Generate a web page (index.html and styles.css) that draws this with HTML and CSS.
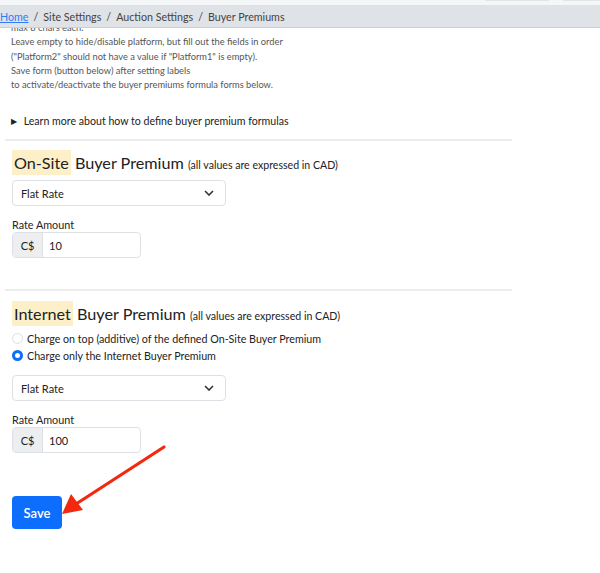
FILE: index.html
```html
<!DOCTYPE html>
<html lang="en">
<head>
    <meta charset="UTF-8">
    <title>Buyer Premiums</title>
    <link rel="stylesheet" href="styles.css">
</head>
<body>
    <!-- Barra superior fija -->
    <div class="topbar">
        <div class="tabstrip">
            <span class="tab tab-a"></span>
            <span class="tab tab-b"></span>
        </div>
        <nav class="breadcrumb">
            <a href="#">Home</a>
            <span class="sep">/</span>
            <span>Site Settings</span>
            <span class="sep">/</span>
            <span>Auction Settings</span>
            <span class="sep">/</span>
            <span>Buyer Premiums</span>
        </nav>
    </div>

    <main class="content">
        <p class="help">
            max 8 chars each.<br>
            Leave empty to hide/disable platform, but fill out the fields in order<br>
            ("Platform2" should not have a value if "Platform1" is empty).<br>
            Save form (button below) after setting labels<br>
            to activate/deactivate the buyer premiums formula forms below.
        </p>

        <div class="details"><span class="caret">&#9654;</span> Learn more about how to define buyer premium formulas</div>

        <hr>

        <section class="premium">
            <h2><mark>On-Site</mark> Buyer Premium <small>(all values are expressed in CAD)</small></h2>
            <div class="select">Flat Rate
                <svg width="10" height="6" viewBox="0 0 10 6"><path d="M1 1l4 4 4-4" fill="none" stroke="#333" stroke-width="1.6"/></svg>
            </div>
            <label class="field-label">Rate Amount</label>
            <div class="input-group"><span class="addon">C$</span><span class="value">10</span></div>
        </section>

        <hr>

        <section class="premium">
            <h2><mark>Internet</mark> Buyer Premium <small>(all values are expressed in CAD)</small></h2>
            <div class="radio first"><span class="dot"></span> Charge on top (additive) of the defined On-Site Buyer Premium</div>
            <div class="radio"><span class="dot checked"></span> Charge only the Internet Buyer Premium</div>
            <div class="select select-gap">Flat Rate
                <svg width="10" height="6" viewBox="0 0 10 6"><path d="M1 1l4 4 4-4" fill="none" stroke="#333" stroke-width="1.6"/></svg>
            </div>
            <label class="field-label">Rate Amount</label>
            <div class="input-group"><span class="addon">C$</span><span class="value">100</span></div>
        </section>

        <button class="btn-save">Save</button>
    </main>

    <!-- Flecha roja de anotación -->
    <svg class="arrow" width="600" height="573" viewBox="0 0 600 573">
        <line x1="164" y1="447" x2="76" y2="504" stroke="#f2290f" stroke-width="3.2" stroke-linecap="round"/>
        <polygon points="62,514 71,494 83,510" fill="#f2290f"/>
    </svg>
</body>
</html>
```

FILE: styles.css
```css
body {
    margin: 0;
    font-family: Lato, "Noto Sans", sans-serif;
    color: #222;
    background: #fff;
}

.topbar {
    position: fixed;
    top: 0;
    left: 0;
    right: 0;
    z-index: 2;
}

.tabstrip {
    height: 5px;
    background: #f5f6f8;
    position: relative;
}

.tab {
    position: absolute;
    top: 0;
    height: 1px;
    background: #e2e4e8;
    border-radius: 0 0 3px 3px;
}

.tab-a { left: 485px; width: 64px; }
.tab-b { left: 563px; width: 37px; }

.breadcrumb {
    display: flex;
    align-items: center;
    gap: 5px;
    height: 22px;
    background: #dfe2e6;
    border-bottom: 1px solid #ccd0d4;
    font-size: 10.7px;
    color: #444;
    white-space: nowrap;
}

.breadcrumb a {
    color: #2f7cf6;
    text-decoration: underline;
}

.content {
    padding: 21px 88px 40px 5px;
}

.help {
    margin: 0 0 0 6px;
    font-size: 9.3px;
    line-height: 14.3px;
    color: #555;
}

.details {
    margin: 23px 0 0 6px;
    font-size: 10.6px;
    color: #222;
}

.caret {
    font-size: 8px;
    margin-right: 4px;
    vertical-align: 1px;
}

hr {
    border: 0;
    border-top: 2px solid #ececec;
    margin: 12px 0 0;
}

.premium {
    padding: 9px 0 19px 7px;
}

.premium + hr + .premium {
    padding-top: 10px;
}

.premium h2 {
    margin: 0;
    font-size: 16.2px;
    font-weight: 400;
    line-height: 26px;
}

mark {
    background: #fdf0c9;
    color: #222;
    padding: 3px 2px;
}

small {
    font-size: 10.6px;
}

.select {
    width: 193px;
    height: 24px;
    margin-top: 2px;
    border: 1px solid #dde1e5;
    border-radius: 4px;
    display: flex;
    align-items: center;
    justify-content: space-between;
    padding: 0 11px 0 8px;
    font-size: 11px;
}

.select-gap {
    margin-top: 11px;
}

.field-label {
    display: block;
    margin-top: 12px;
    font-size: 10.8px;
}

.input-group {
    display: flex;
    width: 127px;
    height: 24px;
    margin-top: 1px;
    border: 1px solid #dde1e5;
    border-radius: 4px;
    overflow: hidden;
    font-size: 11px;
}

.addon {
    width: 29px;
    background: #eceeef;
    border-right: 1px solid #dde1e5;
    display: flex;
    align-items: center;
    justify-content: center;
}

.value {
    display: flex;
    align-items: center;
    padding-left: 6px;
}

.radio {
    display: flex;
    align-items: center;
    gap: 4px;
    font-size: 10.7px;
    height: 17px;
}

.radio.first {
    margin-top: 1px;
}

.dot {
    width: 11px;
    height: 11px;
    border: 1px solid #dcdfe3;
    border-radius: 50%;
    box-sizing: border-box;
}

.dot.checked {
    border: 3.5px solid #0d6efd;
    background: #fff;
}

.btn-save {
    margin: 24px 0 0 7px;
    width: 50px;
    height: 33px;
    border: 0;
    border-radius: 4px;
    background: #0d6efd;
    color: #fff;
    font-family: Lato, sans-serif;
    font-size: 13px;
    font-weight: 600;
}

.arrow {
    position: absolute;
    top: 0;
    left: 0;
    pointer-events: none;
}
```
